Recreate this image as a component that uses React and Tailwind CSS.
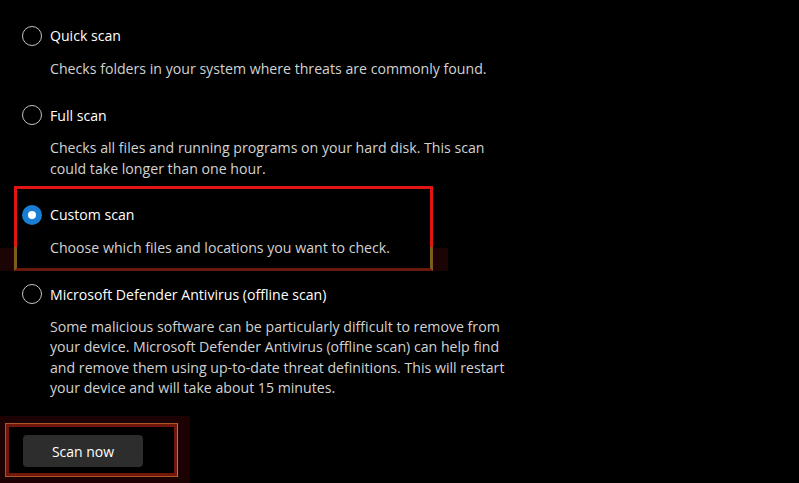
import React from 'react';

const options = [
  {
    id: 'quick',
    label: 'Quick scan',
    desc: ['Checks folders in your system where threats are commonly found.'],
  },
  {
    id: 'full',
    label: 'Full scan',
    desc: [
      'Checks all files and running programs on your hard disk. This scan',
      'could take longer than one hour.',
    ],
  },
  {
    id: 'custom',
    label: 'Custom scan',
    desc: ['Choose which files and locations you want to check.'],
  },
  {
    id: 'offline',
    label: 'Microsoft Defender Antivirus (offline scan)',
    desc: [
      'Some malicious software can be particularly difficult to remove from',
      'your device. Microsoft Defender Antivirus (offline scan) can help find',
      'and remove them using up-to-date threat definitions. This will restart',
      'your device and will take about 15 minutes.',
    ],
  },
];

function Radio({ checked }) {
  if (checked) {
    return (
      <span className="flex h-5 w-5 shrink-0 items-center justify-center rounded-full bg-[#1a7fd4]">
        <span className="h-2 w-2 rounded-full bg-white" />
      </span>
    );
  }
  return <span className="h-5 w-5 shrink-0 rounded-full border-[1.5px] border-[#c4c4c4]" />;
}

export default function App() {
  const selected = 'custom';

  return (
    <div
      className="relative flex h-[483px] w-[799px] flex-col overflow-hidden bg-black"
      style={{ fontFamily: '"Open Sans", "Noto Sans", sans-serif' }}
    >
      {/* options list */}
      <div className="flex flex-col gap-[26px] pl-[22px] pt-[26px]">
        {options.map((opt) => (
          <div key={opt.id} className="flex flex-col">
            <div className="flex h-5 items-center gap-[8px]">
              <Radio checked={opt.id === selected} />
              <span className="text-[14.1px] text-white">{opt.label}</span>
            </div>
            <div className="mt-[13px] pl-[28px] text-[14.15px] leading-[20.3px] text-[#d2d2d2]">
              {opt.desc.map((line) => (
                <div key={line} className="whitespace-nowrap">{line}</div>
              ))}
            </div>
          </div>
        ))}
      </div>

      {/* scan button, with the highlight drawn round it */}
      <div className="mt-[18px] flex h-[67px] w-[190px] bg-[#1c0202] pl-[5px] pt-[7px]">
        <div className="h-[54px] w-[173px] border border-[#a9562a] border-r-[#b07a30] bg-black">
          <div className="h-full w-full border-[3px] border-[#74170b] bg-black pl-[14px] pt-[8px]">
            <button className="flex h-[32px] w-[120px] items-center justify-center rounded-[4px] bg-[#2d2d2d] text-[14px] text-white">
              Scan now
            </button>
          </div>
        </div>
      </div>

      {/* red highlight around custom scan (annotation over the list) */}
      <div className="absolute left-0 top-[248px] h-[23px] w-[14px] bg-[#1c0404]" />
      <div className="absolute left-[433px] top-[248px] h-[23px] w-[15px] bg-[#1c0404]" />
      <div className="absolute left-[14px] top-[186px] h-[85px] w-[419px] border-[3px] border-[#e01515]">
        <div className="absolute -bottom-[3px] -left-[3px] -right-[3px] h-[24px] border-x-[3px] border-b-[3px] border-x-[#7e5c1c] border-b-[#6a170e]" />
      </div>
    </div>
  );
}
